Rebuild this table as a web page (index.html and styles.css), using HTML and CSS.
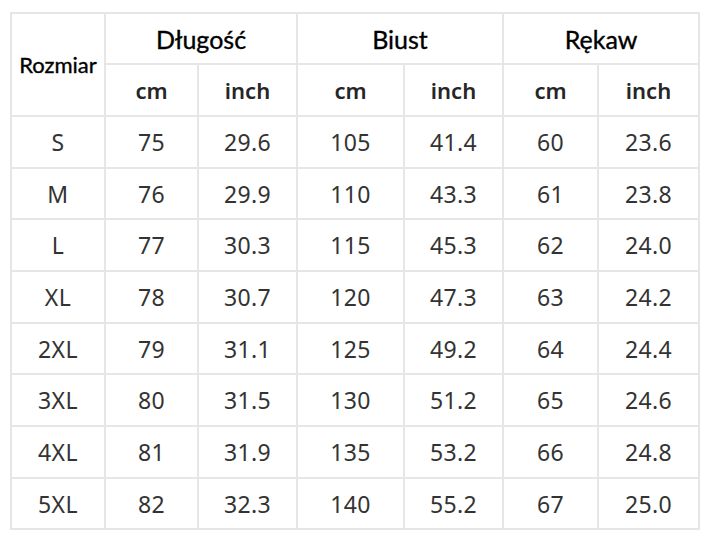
FILE: index.html
```html
<!DOCTYPE html>
<html lang="pl">
<head>
<meta charset="utf-8">
<link rel="stylesheet" href="styles.css">
</head>
<body>
<table class="size-table">
  <colgroup>
    <col class="c1"><col class="c2"><col class="c3"><col class="c4"><col class="c5"><col class="c6"><col class="c7">
  </colgroup>
  <thead>
    <tr class="h1">
      <th rowspan="2" class="size-head">Rozmiar</th>
      <th colspan="2" class="group">Długość</th>
      <th colspan="2" class="group">Biust</th>
      <th colspan="2" class="group">Rękaw</th>
    </tr>
    <tr class="h2">
      <th class="unit">cm</th><th class="unit">inch</th>
      <th class="unit">cm</th><th class="unit">inch</th>
      <th class="unit">cm</th><th class="unit">inch</th>
    </tr>
  </thead>
  <tbody>
    <tr class="r52"><td>S</td><td>75</td><td>29.6</td><td>105</td><td>41.4</td><td>60</td><td>23.6</td></tr>
    <tr class="r51"><td>M</td><td>76</td><td>29.9</td><td>110</td><td>43.3</td><td>61</td><td>23.8</td></tr>
    <tr class="r52"><td>L</td><td>77</td><td>30.3</td><td>115</td><td>45.3</td><td>62</td><td>24.0</td></tr>
    <tr class="r52"><td>XL</td><td>78</td><td>30.7</td><td>120</td><td>47.3</td><td>63</td><td>24.2</td></tr>
    <tr class="r51"><td>2XL</td><td>79</td><td>31.1</td><td>125</td><td>49.2</td><td>64</td><td>24.4</td></tr>
    <tr class="r52"><td>3XL</td><td>80</td><td>31.5</td><td>130</td><td>51.2</td><td>65</td><td>24.6</td></tr>
    <tr class="r52"><td>4XL</td><td>81</td><td>31.9</td><td>135</td><td>53.2</td><td>66</td><td>24.8</td></tr>
    <tr class="r51"><td>5XL</td><td>82</td><td>32.3</td><td>140</td><td>55.2</td><td>67</td><td>25.0</td></tr>
  </tbody>
</table>
</body>
</html>
```
FILE: styles.css
```css
html, body {
  margin: 0;
  padding: 0;
  background: #ffffff;
}
body {
  padding: 12px 0 0 10px;
}
.size-table {
  border-collapse: collapse;
  table-layout: fixed;
  width: 688px;
}
.size-table th,
.size-table td {
  border: 2px solid #e6e6e6;
  padding: 0;
  text-align: center;
  vertical-align: middle;
}
.c1 { width: 94px; }
.c2 { width: 93px; }
.c3 { width: 99px; }
.c4 { width: 107px; }
.c5 { width: 99px; }
.c6 { width: 95px; }
.c7 { width: 101px; }
.h1 { height: 51px; }
.h2 { height: 52px; }
.r52 { height: 52px; }
.r51 { height: 51px; }
.size-head {
  font-family: "Lato", "Liberation Sans", sans-serif;
  font-weight: 400;
  font-size: 22px;
  color: #000;
  -webkit-text-stroke: 0.35px #000;
  padding: 0 0 10px 0;
}
.group {
  font-family: "Lato", "Liberation Sans", sans-serif;
  font-weight: 400;
  font-size: 25px;
  color: #000;
  -webkit-text-stroke: 0.35px #000;
  padding-top: 8px;
}
.unit {
  font-family: "Noto Sans", "Liberation Sans", sans-serif;
  font-weight: 600;
  font-size: 22px;
  color: #262626;
  padding-top: 4px;
}
.size-table td {
  font-family: "Noto Sans", "Liberation Sans", sans-serif;
  font-weight: 400;
  font-size: 23px;
  color: #333;
  letter-spacing: 0.4px;
}
```
